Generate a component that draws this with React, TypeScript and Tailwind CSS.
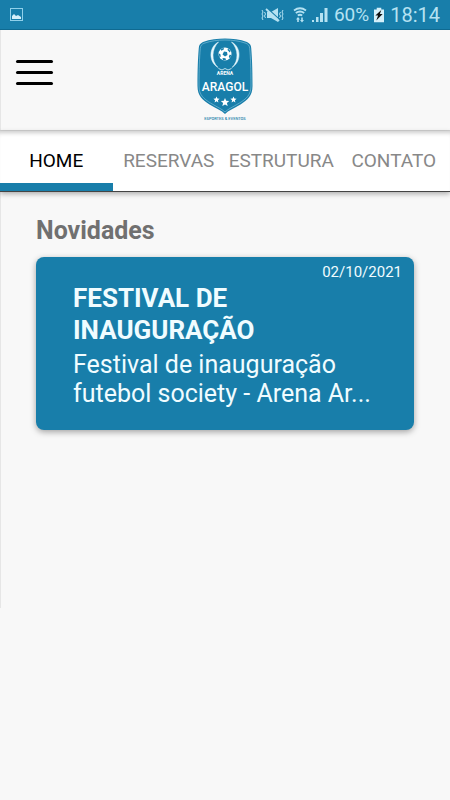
const tabs = [
  { id: "home", label: "HOME" },
  { id: "reservas", label: "RESERVAS" },
  { id: "estrutura", label: "ESTRUTURA" },
  { id: "contato", label: "CONTATO" },
];

const novidades = [
  {
    date: "02/10/2021",
    title: "FESTIVAL DE INAUGURAÇÃO",
    description: "Festival de inauguração futebol society - Arena Ar...",
  },
];

function StatusBar() {
  return (
    <div className="flex h-[30px] items-center border-b border-[#0f6a91] bg-[#187eaa] px-[10px] text-[#b5e2f2]">
      <svg className="h-[13px] w-[13px]" viewBox="0 0 13 13" fill="none">
        <rect x="0.5" y="0.5" width="12" height="12" stroke="#8fd0ea" />
        <path d="M2 11V8l2-2 2 2 2-1 3 2v2z" fill="#d5f0fa" />
      </svg>
      <div className="ml-auto flex items-center">
        <svg className="h-4 w-[23px]" viewBox="0 0 23 16" fill="none" stroke="currentColor">
          <path d="M1 3l1 2-1 2 1 2-1 2 1 2M3.500 5l1 2-1 2 1 2M22 3l-1 2 1 2-1 2 1 2-1 2M19.500 5l-1 2 1 2-1 2" />
          <path d="M6 5h4l7-4v14l-7-4H6z" fill="currentColor" stroke="none" />
          <path d="M6.500 1.500l12 11" stroke="#187eaa" strokeWidth="1.200" />
          <path d="M5 2l13 12" strokeWidth="1.800" />
        </svg>
        <svg className="ml-[9px] h-4 w-[14px]" viewBox="0 0 14 16" fill="none" stroke="currentColor" strokeWidth="1.800">
          <path d="M1 3.500q6-4.500 12 0M2.800 6q4.200-3 8.400 0M4.800 8.500q2.200-1.500 4.400 0" />
          <path d="M5 10l2 2.500H5.800V15H4.200v-2.500H3zM9 15.500L7 13h1.200v-2.500h1.600V13H11z" fill="currentColor" stroke="none" />
        </svg>
        <svg className="ml-[5px] h-4 w-4" viewBox="0 0 16 16" fill="currentColor">
          <path d="M0 13h2v2H0zM4 10h2.500v5H4zM8 6h3v9H8zM12.500 1H15.500v14h-3z" />
        </svg>
        <span className="ml-[6px] text-[19px] leading-[30px]">60%</span>
        <svg className="ml-[5px] h-4 w-[10px]" viewBox="0 0 11 16">
          <path d="M3 0h5v2h3v14H0V2h3z" fill="#d5f0fa" />
          <path d="M8 2.500L1.500 8.500h3L2.500 14l7-7H6.500z" fill="#111" />
        </svg>
        <span className="ml-[6px] text-[20px] leading-[30px]">18:14</span>
      </div>
    </div>
  );
}

function Ball() {
  return (
    <g transform="translate(28 16)">
      <circle r="6.500" fill="#fff" />
      <g fill="#187eaa">
        <path d="M-1-2.500l3 .5.500 3-2.500 1.500-2.500-2z" />
        <path d="M-4.500-4.500l3-1.700.5 1.500-2.500 1.500zM3-5.500L5.500-3 4.800-1.500 2.500-4zM6.300 1L5 4.200 3.800 3 4.500.8zM-6.400-.5l1.700.5.500 2.500-1.200.8zM-2.500 4l3 .3.500 1.900-3-.3z" />
      </g>
    </g>
  );
}

function Logo() {
  return (
    <svg
      className="h-[84px] w-14"
      viewBox="0 0 56 84"
      role="img"
      aria-label="Arena Aragol"
      fontFamily="Roboto, sans-serif"
      textAnchor="middle"
    >
      <path
        d="M28 .5c7 0 15 .8 22 3.500 3 1.500 4 3 4.200 6C55 20 55.500 30 55.500 48c0 10-5 14-12 18.500-7 4-12 6-15.500 9.500-3.500-3.500-8.500-5.500-15.500-9.500C5.500 62 .5 58 .5 48 .5 30 1 20 1.800 10 2 7 3 5.500 6 4 13 1.300 21 .5 28 .5z"
        fill="#187eaa"
      />
      <path
        d="M28 2c7 0 14 .8 21 3.300 2.500 1.200 3.500 2.500 3.700 5.200C53.500 20 54 30 54 48c0 9-5 13-11.500 17-6.500 4-11.500 6-14.500 9-3-3-8-5-14.500-9C7 61 2 57 2 48 2 30 2.500 20 3.300 10.500 3.500 7.800 4.500 6.500 7 5.300 14 2.800 21 2 28 2z"
        fill="none"
        stroke="#8cc8df"
        strokeWidth="0.600"
      />
      <path
        d="M21.500 4C11.500 9 11.500 24 21 29.500 14 23 14.500 11 21.500 4zM34.500 4C44.500 9 44.500 24 35 29.500 42 23 41.500 11 34.500 4z"
        fill="#e6f7fc"
        stroke="#e6f7fc"
        strokeWidth="0.500"
      />
      <Ball />
      <path d="M21.500 30.500l3.500 1.500 3-1.500 3 1.500 3.500-1.500" fill="none" stroke="#e6f7fc" strokeWidth="0.800" />
      <text x="28" y="37" fontSize="5" fontWeight="700" fill="#fff">
        ARENA
      </text>
      <text x="28" y="53" fontSize="12" fontWeight="500" fill="#fff">
        ARAGOL
      </text>
      <g fill="#fff">
        <path d="M28 60l1.200 2.800 3 .2-2.300 2 .8 3-2.700-1.600-2.700 1.600.8-3-2.300-2 3-.2z" />
        <path d="M19.500 58.500l.9 2.100 2.200.2-1.700 1.500.5 2.200-1.900-1.200-1.900 1.200.5-2.200-1.700-1.500 2.200-.2zM36.500 58.500l.9 2.100 2.200.2-1.700 1.500.5 2.200-1.900-1.200-1.900 1.200.5-2.200-1.700-1.500 2.200-.2z" />
      </g>
      <text x="28" y="82" fontSize="4" fontWeight="500" fill="#187eaa">
        ESPORTES &amp; EVENTOS
      </text>
    </svg>
  );
}

export default function App() {
  return (
    <div className="relative min-h-screen bg-[#f8f8f8] font-['Roboto',sans-serif]">
      {/* edge of the closed drawer */}
      <div className="absolute top-[30px] bottom-48 left-0 w-px bg-[#e6e6e6]" />

      <StatusBar />

      <header className="relative flex h-[101px] justify-center border-b border-[#cfcfcf] pt-2">
        <button
          type="button"
          aria-label="Abrir menu"
          className="absolute top-[30px] left-4 flex w-[37px] flex-col gap-2"
        >
          <span className="h-[3px] w-full rounded-sm bg-black" />
          <span className="h-[3px] w-full rounded-sm bg-black" />
          <span className="h-[3px] w-full rounded-sm bg-black" />
        </button>
        <Logo />
      </header>

      <nav className="relative grid h-[61px] grid-cols-4 border-b border-[#444] bg-white shadow-[inset_0_5px_4px_-3px_rgba(0,0,0,0.2),0_2px_5px_rgba(0,0,0,0.3)]">
        {tabs.map((tab) => (
          <button
            key={tab.id}
            type="button"
            className={`flex items-center justify-center border-b-8 pt-2 text-[19px] ${
              tab.id === "home"
                ? "border-[#187eaa] text-black"
                : "border-transparent text-[#888]"
            }`}
          >
            {tab.label}
          </button>
        ))}
      </nav>

      <main className="px-9 pt-6">
        <h2 className="text-[25px] leading-[30px] font-bold text-[#707070]">
          Novidades
        </h2>
        {novidades.map((item) => (
          <article
            key={item.title}
            className="mt-[11px] rounded-lg bg-[#187eaa] pt-[5px] pb-[22px] text-[#f0fcff] shadow-[0_2px_6px_rgba(0,0,0,0.35)]"
          >
            <p className="pr-3 text-right text-[15px] leading-5">{item.date}</p>
            <div className="pr-9 pl-[37px]">
              <h3 className="pr-16 text-[26px] leading-8 font-bold">
                {item.title}
              </h3>
              <p className="mt-1 text-[25px] leading-[29px]">
                {item.description}
              </p>
            </div>
          </article>
        ))}
      </main>
    </div>
  );
}
